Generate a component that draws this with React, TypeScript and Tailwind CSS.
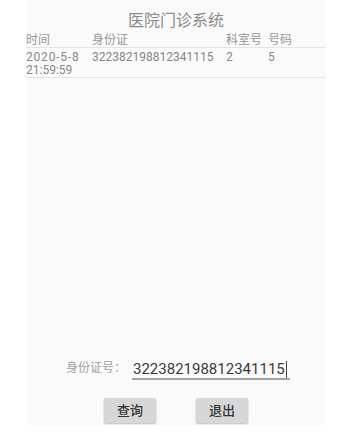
const records = [
  { time: ['2020-5-8', '21:59:59'], id: '322382198812341115', room: '2', no: '5' },
];

export default function App() {
  return (
    <div
      className="h-[434px] w-[350px] bg-white"
      style={{ fontFamily: 'Roboto, "Noto Sans CJK SC", sans-serif' }}
    >
      <div className="ml-[26px] flex h-[425px] w-[300px] flex-col bg-[#fafafa]">
        {/* Title */}
        <div className="mt-[11px] text-center text-[16px] leading-[20px] text-[#8a8a8a]">
          医院门诊系统
        </div>

        {/* Table header */}
        <div className="grid grid-cols-[66px_134px_42px_1fr] border-b border-[#e4e4e4] pt-[2px] text-[12px] leading-[14px] text-[#969696]">
          <div>时间</div>
          <div>身份证</div>
          <div>科室号</div>
          <div>号码</div>
        </div>

        {/* Rows */}
        {records.map(r => (
          <div
            key={r.id}
            className="grid grid-cols-[66px_134px_42px_1fr] border-b border-[#e4e4e4] pt-[3px] text-[12px] leading-[13px] text-[#868686]"
          >
            <div>
              <div className="tracking-[0.8px]">{r.time[0]}</div>
              <div>{r.time[1]}</div>
            </div>
            <div>{r.id}</div>
            <div>{r.room}</div>
            <div>{r.no}</div>
          </div>
        ))}

        <div className="flex-1" />

        {/* Query input */}
        <div className="flex items-end justify-center pl-[4px]">
          <span className="mb-[5px] text-[12px] leading-[14px] text-[#a0a0a0]">身份证号：</span>
          <div className="ml-[6px] flex h-[20px] w-[158px] items-center border-b-2 border-[#a3a3a3] pl-px">
            <span className="text-[15px] leading-[18px] text-[#3a3a3a]">322382198812341115</span>
            <span className="ml-px h-[17px] w-px bg-[#444]" />
          </div>
        </div>

        {/* Buttons */}
        <div className="mt-[18px] mb-[2px] flex justify-center gap-[40px]">
          <button className="h-[25px] w-[52px] rounded-[2px] bg-[#d6d7d7] text-[13px] font-medium text-[#333] shadow-[0_1px_2px_rgba(0,0,0,0.25)]">
            查询
          </button>
          <button className="h-[25px] w-[52px] rounded-[2px] bg-[#d6d7d7] text-[13px] font-medium text-[#333] shadow-[0_1px_2px_rgba(0,0,0,0.25)]">
            退出
          </button>
        </div>
      </div>
    </div>
  );
}
